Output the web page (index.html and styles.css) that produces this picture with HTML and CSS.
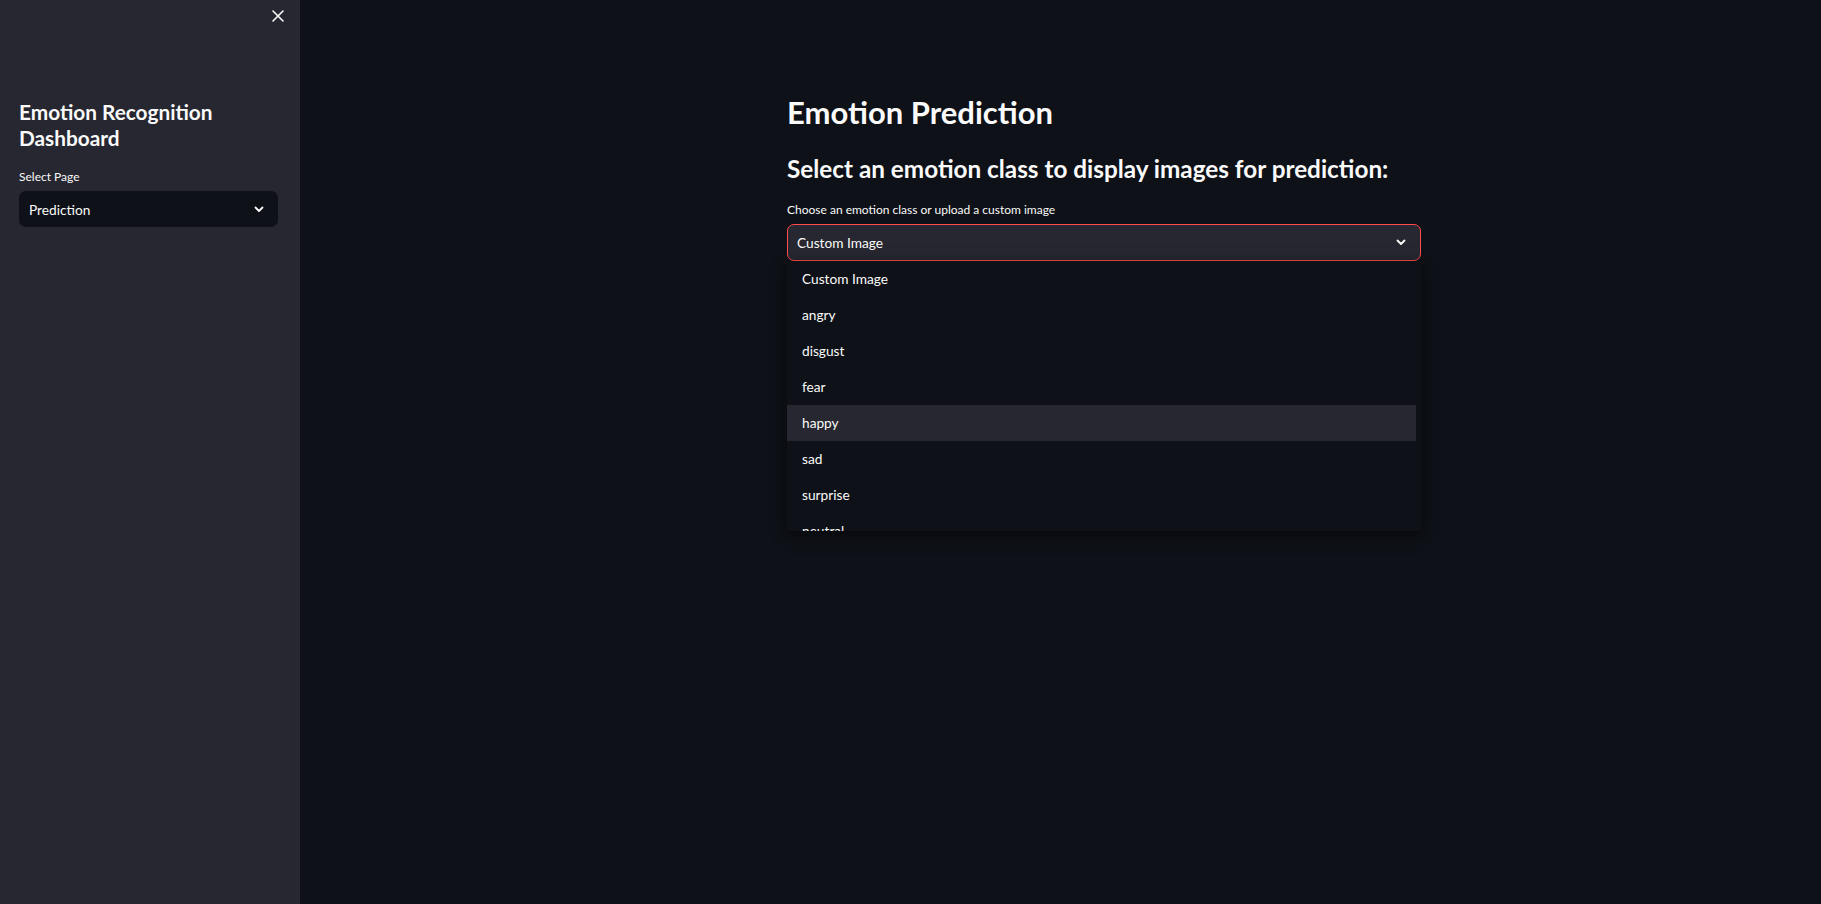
FILE: index.html
```html
<!DOCTYPE html>
<html lang="en">
<head>
<meta charset="utf-8">
<title>Emotion Recognition Dashboard</title>
<link rel="stylesheet" href="styles.css">
</head>
<body>
<div class="app">
  <aside class="sidebar">
    <div class="sidebar-top">
      <button class="close-btn" aria-label="Close sidebar">
        <svg width="12" height="12" viewBox="0 0 12 12"><path d="M1 1 L11 11 M11 1 L1 11" stroke="#fafafa" stroke-width="1.6" stroke-linecap="round" fill="none"/></svg>
      </button>
    </div>
    <h1 class="side-title">Emotion Recognition Dashboard</h1>
    <div class="side-label">Select Page</div>
    <div class="side-select">
      <span>Prediction</span>
      <svg class="chev" width="10" height="7" viewBox="0 0 10 7"><polyline points="1.5,1.5 5,5 8.5,1.5" stroke="#fafafa" stroke-width="1.8" fill="none" stroke-linecap="round" stroke-linejoin="round"/></svg>
    </div>
  </aside>
  <main class="main">
    <div class="block">
      <h1 class="page-title">Emotion Prediction</h1>
      <h3 class="sub-title">Select an emotion class to display images for prediction:</h3>
      <div class="field-label">Choose an emotion class or upload a custom image</div>
      <div class="select-wrap">
        <div class="main-select">
          <span>Custom Image</span>
          <svg class="chev" width="10" height="7" viewBox="0 0 10 7"><polyline points="1.5,1.5 5,5 8.5,1.5" stroke="#fafafa" stroke-width="1.8" fill="none" stroke-linecap="round" stroke-linejoin="round"/></svg>
        </div>
        <ul class="menu">
          <li>Custom Image</li>
          <li>angry</li>
          <li>disgust</li>
          <li>fear</li>
          <li class="hover">happy</li>
          <li>sad</li>
          <li>surprise</li>
          <li>neutral</li>
        </ul>
      </div>
    </div>
  </main>
</div>
</body>
</html>
```
FILE: styles.css
```css
* { box-sizing: border-box; }
html, body {
  margin: 0;
  padding: 0;
  height: 100%;
  background: #0e1117;
  color: #fafafa;
  font-family: Lato, "Noto Sans", sans-serif;
}
.app {
  display: flex;
  height: 904px;
  overflow: hidden;
}
.sidebar {
  width: 300px;
  flex: 0 0 300px;
  background: #262730;
  padding: 0 22px 0 19px;
  display: flex;
  flex-direction: column;
}
.sidebar-top {
  height: 99px;
  display: flex;
  justify-content: flex-end;
  align-items: flex-start;
  padding-top: 10px;
  margin-right: -6px;
}
.close-btn {
  background: none;
  border: 0;
  padding: 0;
  width: 12px;
  height: 12px;
  display: flex;
  cursor: pointer;
}
.side-title {
  margin: 0;
  font-size: 20.8px;
  line-height: 26px;
  font-weight: 700;
  color: #fafafa;
}
.side-label {
  margin-top: 18px;
  font-size: 12px;
  line-height: 16px;
  height: 16px;
}
.side-select {
  margin-top: 6px;
  height: 36px;
  background: #0e1117;
  border-radius: 7px;
  display: flex;
  align-items: center;
  justify-content: space-between;
  padding: 0 14px 0 10px;
  font-size: 13.7px;
}
.main {
  flex: 1;
  padding-top: 92px;
}
.block {
  margin-left: 487px;
  width: 704px;
}
.page-title {
  margin: 0;
  font-size: 31px;
  line-height: 40px;
  font-weight: 700;
}
.sub-title {
  margin: 21px 0 0;
  font-size: 24.3px;
  line-height: 32px;
  font-weight: 700;
}
.field-label {
  margin-top: 17px;
  font-size: 12px;
  line-height: 16px;
  height: 16px;
}
.select-wrap {
  margin-top: 6px;
  width: 634px;
}
.main-select {
  height: 37px;
  background: #262730;
  border: 1px solid #ff4b4b;
  border-radius: 7px;
  display: flex;
  align-items: center;
  justify-content: space-between;
  padding: 0 14px 0 9px;
  font-size: 13.7px;
}
.menu {
  list-style: none;
  margin: 0;
  padding: 0 5px 0 0;
  height: 270px;
  overflow: hidden;
  background: #0e1117;
  box-shadow: 0 4px 14px rgba(0,0,0,0.55);
}
.menu li {
  height: 36px;
  line-height: 35px;
  padding-left: 15px;
  font-size: 13.7px;
}
.menu li.hover {
  background: #262730;
}
```
